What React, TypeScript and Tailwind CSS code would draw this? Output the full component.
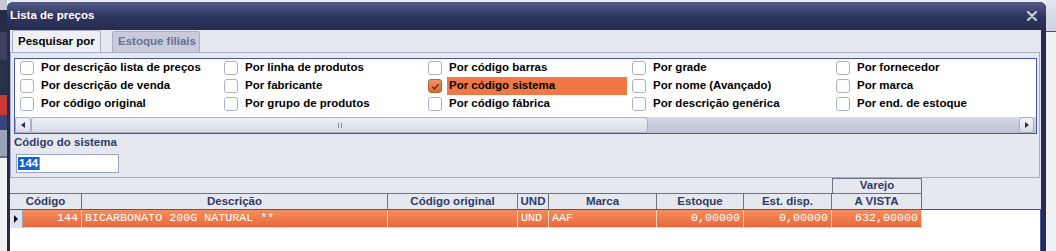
import React from "react";

const options: { label: string; checked?: boolean }[] = [
  { label: "Por descrição lista de preços" },
  { label: "Por linha de produtos" },
  { label: "Por código barras" },
  { label: "Por grade" },
  { label: "Por fornecedor" },
  { label: "Por descrição de venda" },
  { label: "Por fabricante" },
  { label: "Por código sistema", checked: true },
  { label: "Por nome (Avançado)" },
  { label: "Por marca" },
  { label: "Por código original" },
  { label: "Por grupo de produtos" },
  { label: "Por código fábrica" },
  { label: "Por descrição genérica" },
  { label: "Por end. de estoque" },
];

// widths of the grid columns, in px
const cols = [
  { key: "cod", title: "Código", w: 59 },
  { key: "desc", title: "Descrição", w: 306 },
  { key: "orig", title: "Código original", w: 130 },
  { key: "und", title: "UND", w: 31 },
  { key: "marca", title: "Marca", w: 108 },
  { key: "est", title: "Estoque", w: 87 },
  { key: "disp", title: "Est. disp.", w: 88 },
  { key: "vista", title: "A VISTA", w: 90 },
];

const row: Record<string, { v: string; right?: boolean }> = {
  cod: { v: "144", right: true },
  desc: { v: "BICARBONATO 200G NATURAL **" },
  orig: { v: "" },
  und: { v: "UND" },
  marca: { v: "AAF" },
  est: { v: "0,00000", right: true },
  disp: { v: "0,00000", right: true },
  vista: { v: "632,00000", right: true },
};

function Box({ checked }: { checked?: boolean }) {
  if (checked) {
    return (
      <span className="flex h-[14px] w-[14px] shrink-0 items-center justify-center rounded-[3px] border border-[#b0603a] bg-gradient-to-b from-[#f39467] to-[#d9693b]">
        <svg viewBox="0 0 10 10" className="h-[9px] w-[9px]">
          <path d="M1.5 5.2 L3.9 7.8 L8.6 2.2" stroke="#6a2d16" strokeWidth="1.5" fill="none" />
        </svg>
      </span>
    );
  }
  return <span className="h-[14px] w-[14px] shrink-0 rounded-[3px] border border-[#a9b0cc] bg-white" />;
}

function LeftBackdrop() {
  return (
    <div className="flex w-[7px] shrink-0 flex-col">
      <div className="h-[10px] bg-[#c3c7d6]" />
      <div className="h-[22px] bg-[#262a47]" />
      <div className="h-[28px] bg-[#3b4060]" />
      <div className="h-[35px] bg-[#2a2f4c]" />
      <div className="h-[20px] bg-[#c83a36]" />
      <div className="h-[15px] bg-[#36467a]" />
      <div className="h-[26px] bg-[#9ba1b6]" />
      <div className="h-[2px] bg-[#6d7080]" />
      <div className="flex-1 bg-[#f1f1f3]" />
    </div>
  );
}

function RightBackdrop() {
  return (
    <div className="flex w-[10px] shrink-0 flex-col">
      <div className="h-[31px] bg-gradient-to-b from-[#e2e4ee] to-[#cfd2e0]" />
      <div className="h-[1px] bg-[#4d5160]" />
      <div className="flex-1 bg-[#eef0f4]" />
    </div>
  );
}

export default function App() {
  return (
    <div className="flex h-[251px] w-[1056px] overflow-hidden bg-[#eceef3] font-['Liberation_Sans',Arial,sans-serif]">
      <LeftBackdrop />

      {/* window */}
      <div className="mt-[2px] flex w-[1039px] shrink-0 flex-col rounded-t-[6px] bg-[#262b4f]">
        <div className="flex h-[28px] items-center justify-between rounded-t-[6px] bg-gradient-to-b from-[#555b88] via-[#30365f] to-[#272c50] pl-[3px] pr-[9px]">
          <span className="text-[11.5px] font-bold text-white">Lista de preços</span>
          <svg viewBox="0 0 10 10" className="h-[10px] w-[10px]">
            <path d="M1 1 L9 9 M9 1 L1 9" stroke="#c9cdda" strokeWidth="2.2" strokeLinecap="round" />
          </svg>
        </div>

        <div className="ml-[3px] mr-[5px] flex flex-1 flex-col bg-[#e6e8ef]">
          {/* tabs */}
          <div className="flex h-[22px] items-end pl-[2px]">
            <div className="flex h-[22px] w-[89px] items-center rounded-t-[3px] border border-b-0 border-[#a7adc9] bg-[#eef0f5] pl-[5px] text-[11.5px] font-bold text-black">
              Pesquisar por
            </div>
            <div className="ml-[11px] flex h-[21px] w-[88px] items-center rounded-t-[3px] border border-b-0 border-[#a7adc9] bg-[#c8cbdc] pl-[5px] text-[11.5px] font-bold text-[#6a7092]">
              Estoque filiais
            </div>
          </div>

          {/* tab panel */}
          <div className="mr-[1px] border border-[#a7adc9] pb-[4px] pl-[3px] pr-[2px] pt-[5px]">
            <div className="border border-[#4655a6] bg-white">
              <div className="grid grid-cols-[repeat(5,204px)] grid-rows-[repeat(3,18px)]">
                {options.map((o) => (
                  <div key={o.label} className="flex items-center pl-[5px]">
                    <Box checked={o.checked} />
                    <span
                      className={
                        "ml-[5px] flex h-[18px] w-[180px] items-center pl-[2px] text-[11.5px] font-bold text-black " +
                        (o.checked ? "bg-[#f07847]" : "")
                      }
                    >
                      {o.label}
                    </span>
                  </div>
                ))}
              </div>

              {/* horizontal scrollbar */}
              <div className="mt-[4px] flex h-[16px] bg-gradient-to-b from-[#d6d9e5] to-[#bfc3d4]">
                <div className="flex w-[16px] items-center justify-center rounded-[3px] border border-[#a8adc4] bg-gradient-to-b from-[#f4f5f9] to-[#d9dce7]">
                  <svg viewBox="0 0 4 6" className="h-[6px] w-[4px]">
                    <path d="M4 0 L0 3 L4 6 Z" fill="#2a2e44" />
                  </svg>
                </div>
                <div className="flex w-[617px] items-center justify-center rounded-[3px] border border-[#aab0c6] bg-gradient-to-b from-[#eef0f5] to-[#d8dbe6]">
                  <span className="flex gap-[2px]">
                    <span className="h-[5px] w-[1px] bg-[#8a90a8]" />
                    <span className="h-[5px] w-[1px] bg-[#8a90a8]" />
                  </span>
                </div>
                <div className="flex-1" />
                <div className="mr-[2px] flex w-[15px] items-center justify-center rounded-[3px] border border-[#a8adc4] bg-gradient-to-b from-[#f4f5f9] to-[#d9dce7]">
                  <svg viewBox="0 0 4 6" className="h-[6px] w-[4px]">
                    <path d="M0 0 L4 3 L0 6 Z" fill="#2a2e44" />
                  </svg>
                </div>
              </div>
            </div>

            <div className="flex h-[17px] items-center text-[11.5px] font-bold text-[#2f3a66]">Código do sistema</div>
            <div className="ml-[2px] mt-[3px] flex h-[19px] w-[103px] items-center border border-[#9ea4bf] bg-white pl-[1px]">
              <span className="flex h-[13px] items-center bg-[#0c63d3] px-[1px] text-[11.5px] font-bold text-white">144</span>
              <span className="h-[13px] w-[1px] bg-[#f07a3c]" />
            </div>
          </div>

          {/* grid */}
          <div className="flex flex-1 flex-col">
            <div className="flex h-[15px]">
              <div className="w-[822px]" />
              <div className="flex w-[90px] items-center justify-center border-x border-t border-[#6e7282] text-[11.5px] font-bold text-[#2f3a66]">
                Varejo
              </div>
            </div>
            <div className="flex h-[16px]">
              <div className="flex w-[72px] items-center justify-center border-r border-t border-[#6e7282] text-[11.5px] font-bold text-[#2f3a66]">
                Código
              </div>
              {cols.slice(1).map((c) => (
                <div
                  key={c.key}
                  style={{ width: c.w }}
                  className="flex items-center justify-center border-r border-t border-[#6e7282] text-[11.5px] font-bold text-[#2f3a66]"
                >
                  {c.title}
                </div>
              ))}
            </div>
            <div className="flex flex-1 flex-col border-r border-t border-[#4655a6] bg-white">
              <div className="flex h-[18px]">
                <div className="flex w-[13px] items-center justify-center border-r border-[#9aa0b8] bg-[#dfe2ea]">
                  <svg viewBox="0 0 4 8" className="h-[8px] w-[4px]">
                    <path d="M0 0 L4 4 L0 8 Z" fill="#111" />
                  </svg>
                </div>
                {cols.map((c) => (
                  <div
                    key={c.key}
                    style={{ width: c.w }}
                    className={
                      "flex items-center border-b border-r border-[#f6d2bf] bg-gradient-to-b from-[#f58d5e] to-[#e8693a] px-[3px] font-['Liberation_Mono','Courier_New',monospace] text-[11.7px] text-white " +
                      (row[c.key].right ? "justify-end" : "justify-start")
                    }
                  >
                    {row[c.key].v}
                  </div>
                ))}
              </div>
            </div>
          </div>
        </div>
      </div>

      <RightBackdrop />
    </div>
  );
}
